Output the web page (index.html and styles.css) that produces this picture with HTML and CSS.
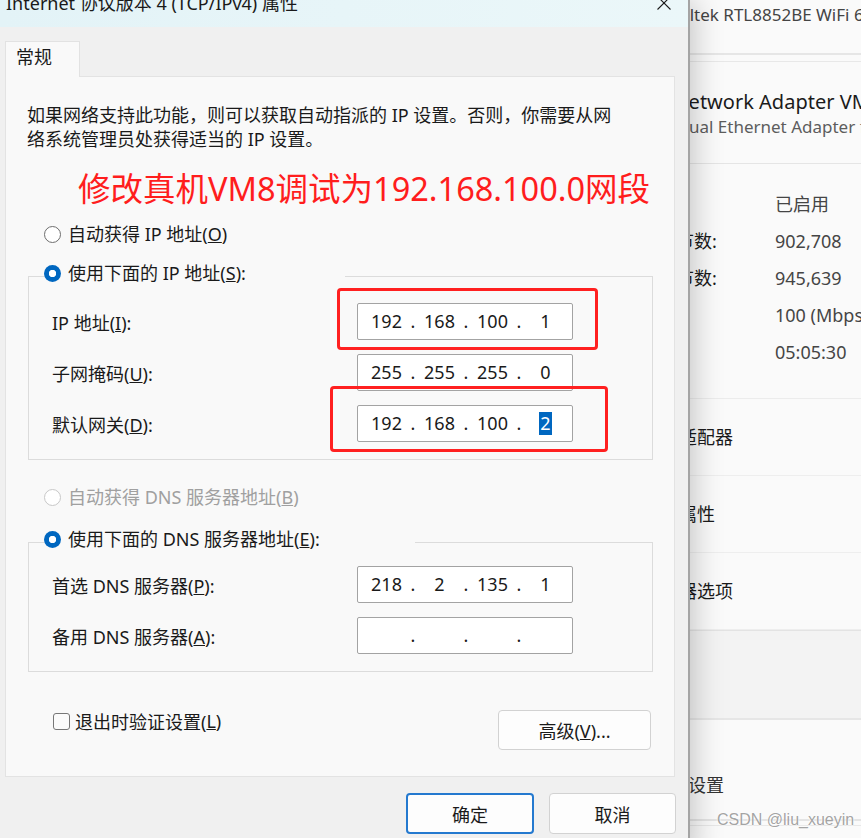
FILE: index.html
```html
<!DOCTYPE html>
<html lang="zh-CN">
<head>
    <meta charset="UTF-8">
    <meta name="viewport" content="width=device-width, initial-scale=1.0">
    <link rel="stylesheet" href="styles.css">
</head>
<body>
    <div class="desktop">
        <!-- settings window behind the dialog -->
        <div class="backwin">
            <div class="bw-head">Realtek RTL8852BE WiFi 6E PCI-E NIC</div>
            <div class="bw-name">
                <div class="bw-title">VMware Network Adapter VMnet8</div>
                <div class="bw-sub">VMware Virtual Ethernet Adapter for VMnet8</div>
            </div>
            <div class="bw-stats">
                <span class="k">状态:</span><span class="v">已启用</span>
                <span class="k">已发送字节数:</span><span class="v">902,708</span>
                <span class="k">已接收字节数:</span><span class="v">945,639</span>
                <span class="k">速度:</span><span class="v">100 (Mbps)</span>
                <span class="k">时长:</span><span class="v">05:05:30</span>
            </div>
            <div class="bw-item">禁用网络适配器</div>
            <div class="bw-item">查看其他属性</div>
            <div class="bw-item">更多适配器选项</div>
            <div class="bw-blank"></div>
            <div class="bw-foot">高级共享设置</div>
            <div class="bw-tail"></div>
            <div class="watermark">CSDN @liu_xueyin</div>
        </div>

        <!-- IPv4 properties dialog -->
        <div class="dialog">
            <div class="titlebar">
                <span class="title">Internet 协议版本 4 (TCP/IPv4) 属性</span>
                <svg class="close" width="14" height="14" viewBox="0 0 14 14">
                    <path d="M0.5 0.5L13.5 13.5M13.5 0.5L0.5 13.5" stroke="#1a1a1a" stroke-width="1.1" fill="none"/>
                </svg>
            </div>
            <div class="dlg-body">
                <div class="tab">常规</div>
                <div class="panel">
                    <p class="desc">如果网络支持此功能，则可以获取自动指派的 IP 设置。否则，你需要从网<br>络系统管理员处获得适当的 IP 设置。</p>
                    <div class="note">修改真机VM8调试为192.168.100.0网段</div>

                    <div class="radio"><span class="dot"></span>自动获得 IP 地址(<u>O</u>)</div>

                    <fieldset class="group">
                        <legend class="leg-ip"><div class="radio on"><span class="dot"></span>使用下面的 IP 地址(<u>S</u>):</div></legend>
                        <div class="rows">
                            <div class="row">
                                <span class="lbl">IP 地址(<u>I</u>):</span>
                                <div class="ipbox"><span class="seg">192</span><span class="sep">.</span><span class="seg">168</span><span class="sep">.</span><span class="seg">100</span><span class="sep">.</span><span class="seg">1</span></div>
                            </div>
                            <div class="row">
                                <span class="lbl">子网掩码(<u>U</u>):</span>
                                <div class="ipbox"><span class="seg">255</span><span class="sep">.</span><span class="seg">255</span><span class="sep">.</span><span class="seg">255</span><span class="sep">.</span><span class="seg">0</span></div>
                            </div>
                            <div class="row">
                                <span class="lbl">默认网关(<u>D</u>):</span>
                                <div class="ipbox"><span class="seg">192</span><span class="sep">.</span><span class="seg">168</span><span class="sep">.</span><span class="seg">100</span><span class="sep">.</span><span class="seg"><span class="sel">2</span></span></div>
                            </div>
                        </div>
                    </fieldset>

                    <div class="radio off dns-auto"><span class="dot"></span>自动获得 DNS 服务器地址(<u>B</u>)</div>

                    <fieldset class="group group-dns">
                        <legend class="leg-dns"><div class="radio on"><span class="dot"></span>使用下面的 DNS 服务器地址(<u>E</u>):</div></legend>
                        <div class="rows">
                            <div class="row">
                                <span class="lbl">首选 DNS 服务器(<u>P</u>):</span>
                                <div class="ipbox"><span class="seg">218</span><span class="sep">.</span><span class="seg">2</span><span class="sep">.</span><span class="seg">135</span><span class="sep">.</span><span class="seg">1</span></div>
                            </div>
                            <div class="row">
                                <span class="lbl">备用 DNS 服务器(<u>A</u>):</span>
                                <div class="ipbox"><span class="seg"></span><span class="sep">.</span><span class="seg"></span><span class="sep">.</span><span class="seg"></span><span class="sep">.</span><span class="seg"></span></div>
                            </div>
                        </div>
                    </fieldset>

                    <div class="panel-foot">
                        <div class="check"><span class="box"></span>退出时验证设置(<u>L</u>)</div>
                        <button class="btn btn-adv">高级(<u>V</u>)...</button>
                    </div>

                    <div class="mark mark-ip"></div>
                    <div class="mark mark-gw"></div>
                </div>
                <div class="actions">
                    <button class="btn btn-ok">确定</button>
                    <button class="btn">取消</button>
                </div>
            </div>
        </div>
    </div>
</body>
</html>
```

FILE: styles.css
```css
* {
    margin: 0;
    padding: 0;
    box-sizing: border-box;
}
body {
    font-family: "Noto Sans", "Noto Sans CJK SC", sans-serif;
    color: #1a1a1a;
    background: #fbfbfb;
}
.desktop {
    position: relative;
    width: 861px;
    height: 838px;
    overflow: hidden;
    background: #fbfbfb;
}

/* Back window */
.backwin {
    position: absolute;
    left: 560px;
    top: 0;
    right: 0;
    bottom: 0;
    background: #fafafa;
    color: #1b1b1b;
}
.bw-head {
    height: 55px;
    padding-left: 100px;
    font-size: 17px;
    line-height: 30px;
    color: #444;
    white-space: nowrap;
    border-bottom: 2px solid #e6e6e6;
    margin-bottom: 6px;
}
.bw-name {
    height: 103px;
    padding: 27px 0 0 32px;
    border-top: 1px solid #e8e8e8;
    border-bottom: 1px solid #e5e5e5;
    white-space: nowrap;
}
.bw-title {
    font-size: 20px;
    line-height: 26px;
}
.bw-sub {
    font-size: 17px;
    line-height: 24px;
    color: #5d5d5d;
}
.bw-stats {
    display: grid;
    grid-template-columns: 171px auto;
    align-content: start;
    height: 235px;
    padding: 22px 0 0 44px;
    font-size: 18px;
    line-height: 37px;
    border-bottom: 1px solid #ececec;
    white-space: nowrap;
}
.bw-stats .v {
    color: #454545;
}
.bw-item {
    height: 77px;
    padding-left: 47px;
    font-size: 18px;
    line-height: 76px;
    border-bottom: 1px solid #eeeeee;
    white-space: nowrap;
}
.bw-blank {
    height: 90px;
    background: #f3f3f3;
    border-top: 1px solid #e3e3e3;
    border-bottom: 2px solid #e6e6e6;
}
.bw-foot {
    height: 101px;
    padding: 53px 0 0 56px;
    font-size: 18px;
    line-height: 24px;
    color: #333;
    border-bottom: 2px solid #e4e4e4;
    white-space: nowrap;
}
.bw-tail {
    margin-top: 4px;
    border-top: 1px solid #e8e8e8;
}
.watermark {
    position: absolute;
    left: 157px;
    top: 809px;
    font-family: "Liberation Sans", sans-serif;
    font-size: 16px;
    line-height: 22px;
    color: rgba(140, 140, 140, 0.8);
    text-shadow: 0 0 2px #fff, 0 0 2px #fff;
}

/* Dialog */
.dialog {
    position: absolute;
    left: 0;
    top: 0;
    width: 690px;
    bottom: -20px;
    background: #f0f0f0;
    border-right: 2px solid #a4a4a4;
    box-shadow: 4px 0 28px rgba(0, 0, 0, 0.22);
}
.titlebar {
    position: relative;
    height: 27px;
    overflow: hidden;
    background: linear-gradient(90deg, #e3f3f7, #ebf7f9);
}
.title {
    display: block;
    margin-top: -6px;
    padding-left: 6px;
    font-size: 18px;
    line-height: 18px;
    white-space: nowrap;
}
.close {
    position: absolute;
    left: 657px;
    top: -4px;
}
.dlg-body {
    padding: 14px 0 0 5px;
}
.tab {
    position: relative;
    z-index: 1;
    width: 75px;
    height: 36px;
    margin-bottom: -1px;
    padding-left: 10px;
    font-size: 18px;
    line-height: 31px;
    background: #f9f9f9;
    border: 1px solid #e2e2e2;
    border-bottom: none;
}
.panel {
    position: relative;
    width: 670px;
    height: 701px;
    padding: 26px 23px 0 21px;
    background: #f9f9f9;
    border: 1px solid #e3e3e3;
    font-size: 18px;
}
.desc {
    line-height: 24px;
}
.note {
    margin: 18px 0 0 51px;
    font-size: 32.5px;
    line-height: 40px;
    color: #ff1d1d;
    white-space: nowrap;
}
.radio {
    display: flex;
    align-items: center;
    height: 24px;
    margin: 13px 0 0 17px;
    line-height: 24px;
    white-space: nowrap;
}
.radio .dot {
    flex: none;
    width: 17px;
    height: 17px;
    margin-right: 7px;
    border-radius: 50%;
    border: 1px solid #6e6e6e;
    background: #fff;
}
.radio.on .dot {
    border: none;
    background: radial-gradient(circle, #fff 0 3.4px, #0067c0 4px);
}
.radio.off {
    color: #a0a0a0;
}
.radio.off .dot {
    border-color: #c8c8c8;
}
.dns-auto {
    margin-top: 25px;
}

/* Group boxes */
.group {
    width: 625px;
    margin: 15px 0 0 1px;
    padding: 0 0 17px;
    border: 1px solid #dcdcdc;
    min-width: 0;
}
.group-dns {
    margin-top: 18px;
}
.group legend {
    margin-left: 15px;
    padding: 0 0 6px;
}
.group legend .radio {
    margin: 0;
}
.leg-ip {
    width: 301px;
}
.leg-dns {
    width: 371px;
}
.rows {
    display: flex;
    flex-direction: column;
    gap: 14px;
    padding: 12px 0 0 23px;
}
.group-dns .rows {
    padding-top: 9px;
}
.row {
    display: flex;
    align-items: center;
    height: 37px;
}
.lbl {
    width: 305px;
    white-space: nowrap;
}
.ipbox {
    display: flex;
    width: 216px;
    height: 37px;
    padding-left: 7px;
    background: #fff;
    border: 1px solid #a3a3a3;
    border-radius: 2px;
    line-height: 35px;
}
.seg {
    width: 43px;
    text-align: center;
}
.sep {
    width: 10px;
    text-align: center;
}
.sel {
    display: inline-block;
    padding: 0 1px;
    line-height: 23px;
    background: #0067c0;
    color: #fff;
}

/* Bottom of the tab page */
.panel-foot {
    display: flex;
    justify-content: space-between;
    align-items: flex-start;
    margin-top: 37px;
    padding-left: 26px;
}
.check {
    display: flex;
    align-items: center;
    height: 24px;
    white-space: nowrap;
}
.check .box {
    width: 17px;
    height: 17px;
    margin-right: 5px;
    border: 1px solid #777;
    border-radius: 3px;
    background: #fbfbfb;
}
.btn {
    font-family: inherit;
    font-size: 18px;
    color: #1a1a1a;
    background: #fdfdfd;
    border: 1px solid #d2d2d2;
    border-radius: 4px;
    width: 127px;
    height: 41px;
}
.btn-adv {
    width: 153px;
    height: 40px;
    margin-top: 1px;
}
.btn-ok {
    width: 128px;
    border: 2px solid #2479cf;
}
.actions {
    display: flex;
    justify-content: flex-end;
    gap: 15px;
    margin-top: 16px;
    padding-right: 12px;
}

/* Red annotation boxes */
.mark {
    position: absolute;
    border: 3.5px solid #ff2020;
    border-radius: 4px;
}
.mark-ip {
    left: 331px;
    top: 211px;
    width: 261px;
    height: 62px;
}
.mark-gw {
    left: 324px;
    top: 309px;
    width: 278px;
    height: 66px;
}
```
